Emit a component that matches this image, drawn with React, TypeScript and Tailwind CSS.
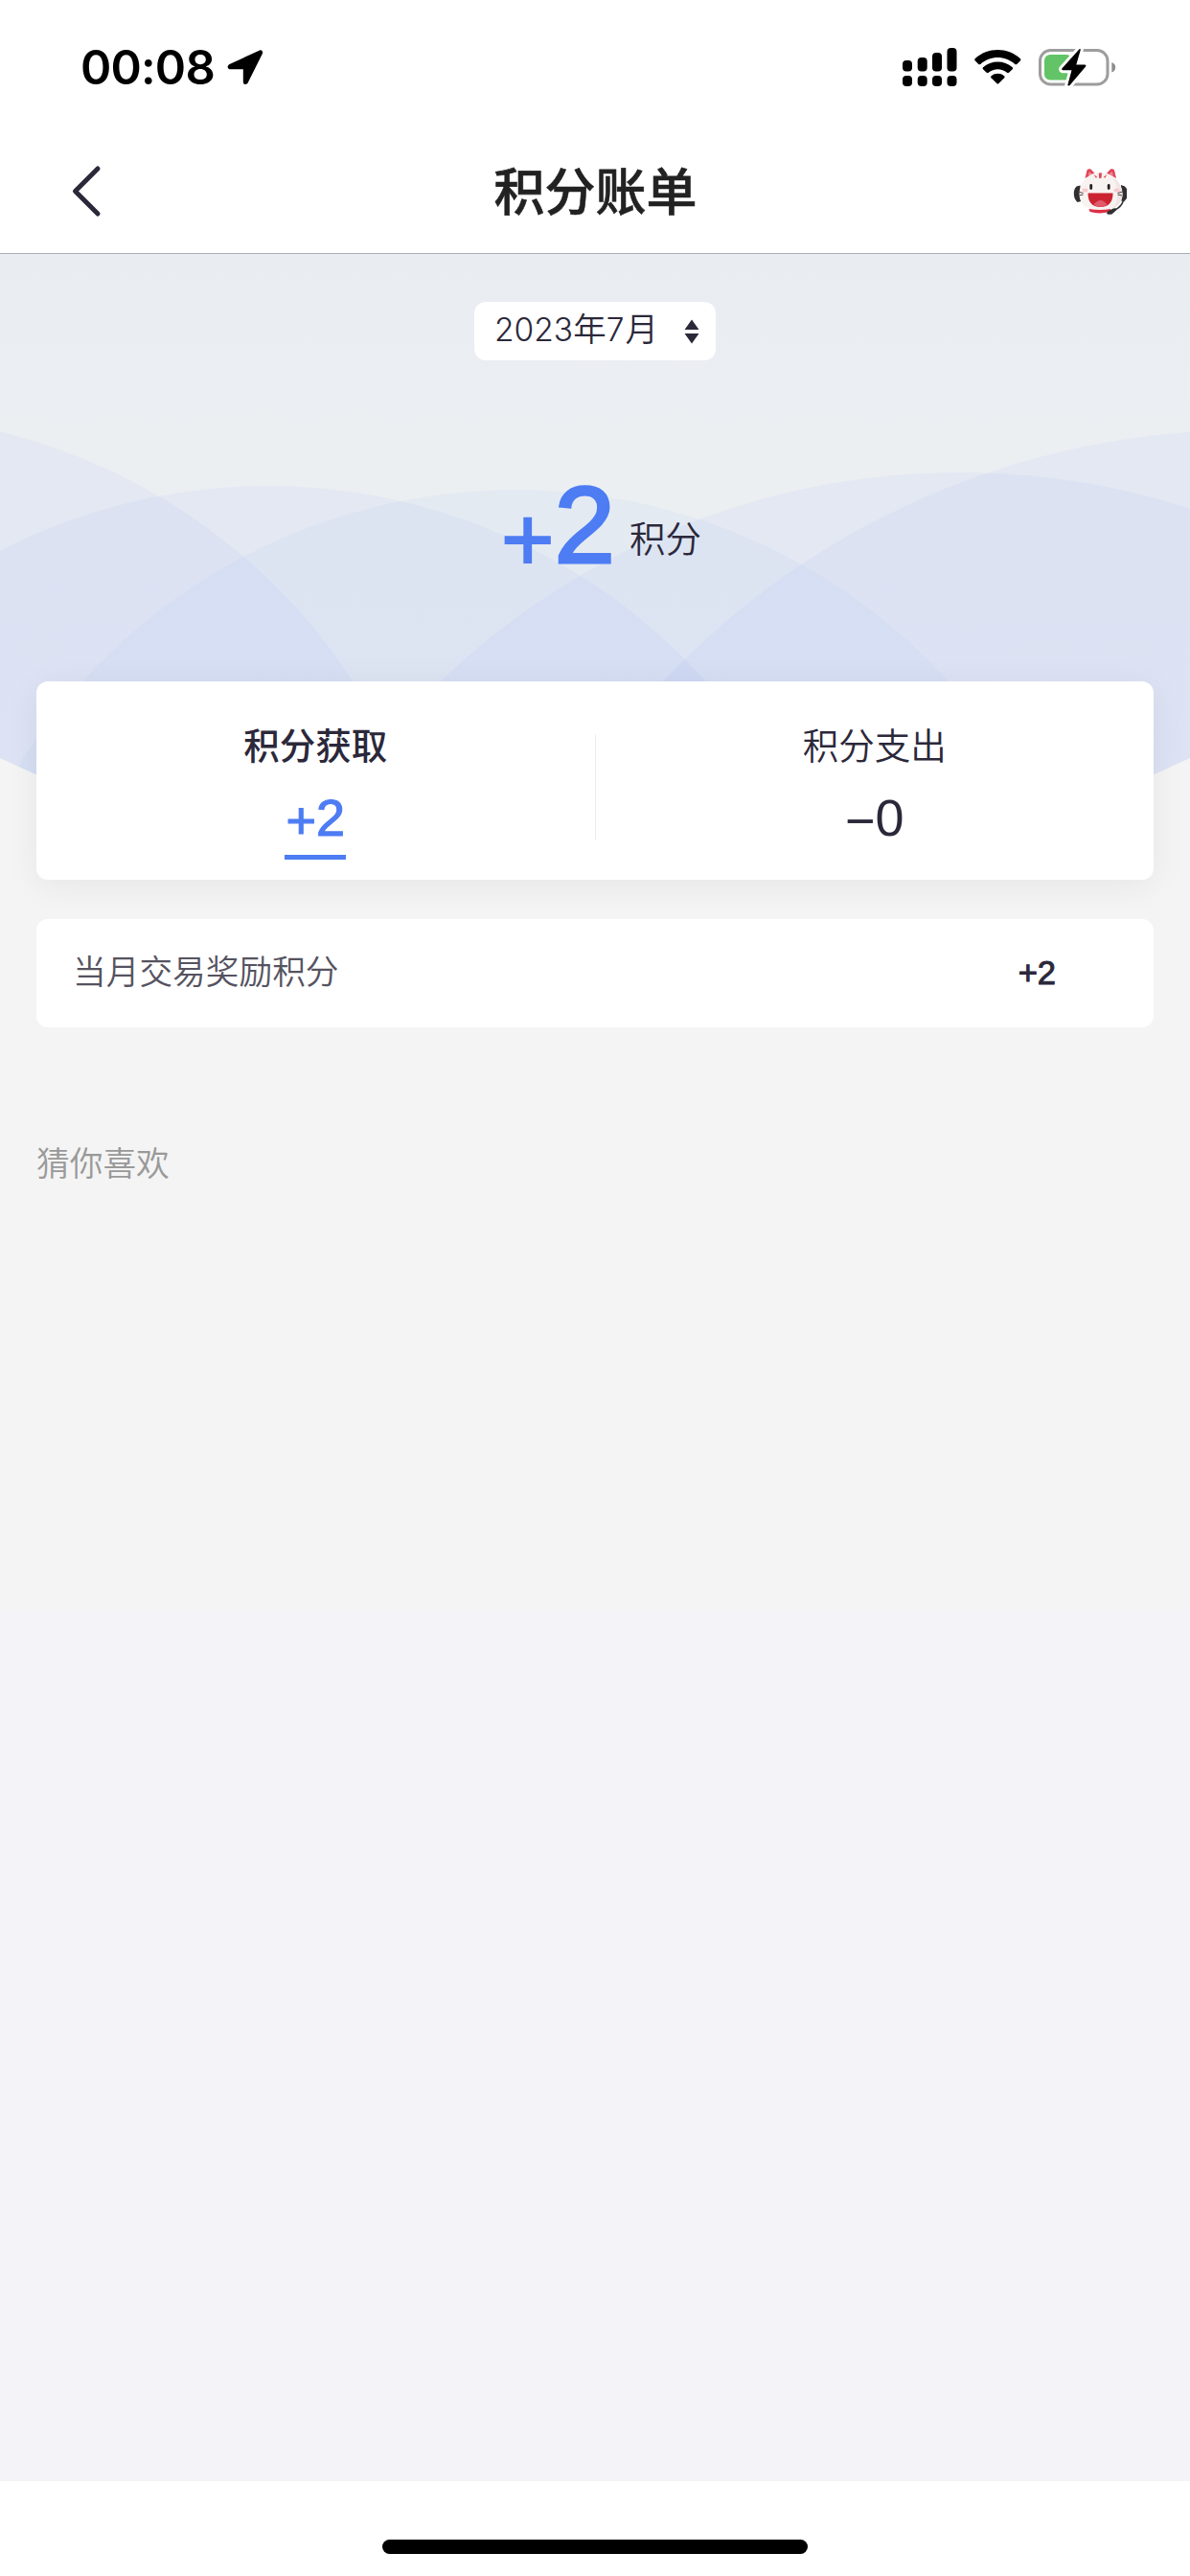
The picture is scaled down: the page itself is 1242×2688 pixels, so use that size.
import { clsx } from "clsx";

const sans = "font-['Liberation_Sans','Noto_Sans_CJK_SC',sans-serif]";

const waves = [
  { cx: -145, cy: 1046, r: 613, fill: "#6c90ff" },
  { cx: 280, cy: 1120, r: 613, fill: "#6c90ff" },
  { cx: 538, cy: 1122, r: 611, fill: "#6cb0ff" },
  { cx: 1002, cy: 1276, r: 783, fill: "#6c90ff" },
  { cx: 1300, cy: 1286, r: 837, fill: "#6c90ff" },
];

const records = [{ name: "当月交易奖励积分", value: "+2" }];

function StatusIcons() {
  return (
    <svg className="h-[44px] w-[226px]" viewBox="940 48 226 44" fill="none">
      {/* dual sim signal */}
      <g fill="#000">
        <rect x="941" y="63" width="10" height="11.5" rx="4" />
        <rect x="956.7" y="60" width="10" height="14.5" rx="4" />
        <rect x="972" y="55" width="10" height="19.5" rx="4" />
        <rect x="987.5" y="50" width="10" height="24.5" rx="4" />
        <rect x="941" y="79" width="10" height="11" rx="4" />
        <rect x="956.7" y="79" width="10" height="11" rx="4" />
        <rect x="972" y="79" width="10" height="11" rx="4" />
        <rect x="987.5" y="79" width="10" height="11" rx="4" />
      </g>
      {/* wifi */}
      <g fill="#000">
        <path d="M1016.6 61.2C1030 48.9 1050.500 48.900 1064 61.200Q1064.900 62.200 1064 63.200L1060.300 66.900Q1059.300 67.700 1058.300 66.900C1048 57.700 1032.500 57.700 1022.300 66.900Q1021.300 67.700 1020.300 66.900L1016.600 63.200Q1015.700 62.200 1016.600 61.200Z" />
        <path d="M1025 70.200C1033.500 62.500 1047.200 62.500 1055.700 70.200Q1056.600 71.200 1055.700 72.200L1052 75.700Q1051 76.500 1050 75.700C1044.500 71 1036.200 71 1030.700 75.700Q1029.700 76.500 1028.700 75.700L1025 72.200Q1024.100 71.200 1025 70.200Z" />
        <path d="M1033.500 79.300C1037.500 76 1043.200 76 1047.200 79.300Q1048.100 80.200 1047.200 81.200L1041.400 87.100Q1040.300 88.100 1039.300 87.100L1033.500 81.200Q1032.600 80.200 1033.500 79.300Z" />
      </g>
      {/* charging battery */}
      <rect x="1084.500" y="52.500" width="70.500" height="35.500" rx="11" stroke="#9d9d9d" strokeWidth="3" />
      <path d="M1159.300 65Q1163.200 66.500 1163.200 70.200Q1163.200 74 1159.300 75.500Z" fill="#8d8d8d" />
      <rect x="1089" y="57" width="29" height="26.500" rx="6" fill="#62c466" />
      <path
        d="M1125.500 51.200L1107.300 71.500Q1106.700 73 1108.300 73.300L1117.500 73.300L1113.300 88.800Q1114 90 1115.500 89L1132.300 69.300Q1132.800 67.800 1131.300 67.500L1122.300 67.500L1126.800 52Q1126.700 50.800 1125.500 51.200Z"
        fill="#000"
        stroke="#fff"
        strokeWidth="6"
        paintOrder="stroke"
      />
    </svg>
  );
}

function Mascot() {
  return (
    <svg className="h-[50px] w-[58px]" viewBox="0 0 58 50" fill="none">
      <path d="M12.500 11L14.500 2.500Q16 .5 18.500 1.500L23 6.500ZM45 11L43 2.500Q41.500 .5 39 1.500L34.500 6.500Z" fill="#e2455a" />
      <path d="M15.500 8L17 4L20 7ZM42 8L40.500 4L37.500 7Z" fill="#f08c96" />
      <path d="M7.500 18.500L3.500 19.500Q.8 22 .8 27Q.8 32.500 4.500 36L8.500 35Z" fill="#303033" />
      <path d="M50 18L54 19.500L56 22V32L53 35.500L49.500 34Z" fill="#303033" />
      <path d="M28.500 5C42 5 51.500 16 51.500 27.500C51.500 37 45 44 28.500 44C12 44 6.500 36.500 6.500 27.500C6.500 15.500 15.500 5 28.500 5Z" fill="#f8f3f1" />
      <path d="M40 9C48 14 51.500 21 51.500 27.500C51.500 34 48 40 41 42.500C48 35 49 20 40 9Z" fill="#efe6e4" />
      <path d="M26.800 5.500H30L29.500 10.500Q28 12 27 10.500ZM21.500 7L25 9.500L24 11ZM35.500 7L32 9.500L33 11Z" fill="#e2455a" />
      <rect x="17.300" y="17" width="2.800" height="6" rx="1.400" fill="#262222" />
      <rect x="35.800" y="17" width="2.800" height="6" rx="1.400" fill="#262222" />
      <ellipse cx="12.500" cy="23.500" rx="3" ry="2" fill="#f9c9cc" />
      <ellipse cx="45.500" cy="23.500" rx="3" ry="2" fill="#f9c9cc" />
      <path d="M5 25L10.500 26.500M6.500 29L10.500 28M46.500 26.500L52 25M46.500 28L51 29" stroke="#4a4444" strokeWidth="1" />
      <path d="M15.500 26.500H41.500Q41.500 41 28.500 41Q15.500 41 15.500 26.500Z" fill="#cb2430" />
      <path d="M21.500 38.500Q28.500 29.500 35.500 38.500Q28.500 43 21.500 38.500Z" fill="#e2596b" />
      <path d="M16.500 43Q28 45 39 43V45.500Q28 49 17.500 46Z" fill="#dd2f45" />
      <path d="M52.500 34Q50.500 41 43.500 44" stroke="#303033" strokeWidth="1.500" />
      <path d="M36 45.500L42 42.500Q46 41.500 45.500 44L40.500 48.500Q35.500 49.500 35 47.500Z" fill="#303033" />
    </svg>
  );
}

function TopBar() {
  return (
    <header className="h-[265px] border-b border-[#aaadb2] bg-white">
      <div className="flex h-[140px] items-center justify-between pl-[84px] pr-[75px]">
        <div className="flex items-center gap-[12px]">
          <span className="w-[140px] whitespace-nowrap pt-[2px] font-['Inter',sans-serif] text-[49px] font-semibold leading-[60px] tracking-[-0.8px] text-black">
            00:08
          </span>
          <svg className="h-[40px] w-[40px]" viewBox="0 0 40 40">
            <path
              d="M3.500 18.200L35.500 3.300Q37.500 3.300 37 5.500L21.500 36.500Q19.200 38 18.800 35.500V21.300H4Q1.500 20.300 3.500 18.200Z"
              fill="#000"
              stroke="#000"
              strokeWidth="2"
              strokeLinejoin="round"
            />
          </svg>
        </div>
        <StatusIcons />
      </div>
      <div className="flex h-[120px] items-center justify-between pl-[70px] pr-[64px]">
        <svg className="h-[60px] w-[58px]" viewBox="0 0 58 60" fill="none">
          <path d="M32 6L8.500 29.500L32 53" stroke="#2b283a" strokeWidth="5" strokeLinecap="round" strokeLinejoin="round" />
        </svg>
        <h1 className="pr-[5px] pt-[3px] text-[53px] font-medium leading-none text-[#222] [-webkit-text-stroke:0.6px_#222]">积分账单</h1>
        <Mascot />
      </div>
    </header>
  );
}

function Waves() {
  return (
    <svg className="absolute left-0 top-0 h-[635px] w-[1242px]" viewBox="0 265 1242 635">
      <defs>
        <linearGradient id="sky" x1="0" y1="0" x2="0" y2="1">
          <stop offset="0" stopColor="#e9edf2" />
          <stop offset="0.4" stopColor="#eceff2" />
          <stop offset="1" stopColor="#edf0f4" />
        </linearGradient>
        <clipPath id="arc">
          <path d="M0 265H1242V791Q1205 808 1180 819L1000 880H242L62 819Q37 808 0 791Z" />
        </clipPath>
      </defs>
      <g clipPath="url(#arc)">
        <rect y="265" width="1242" height="635" fill="url(#sky)" />
        {waves.map((w) => (
          <circle key={w.cx} cx={w.cx} cy={w.cy} r={w.r} fill={w.fill} fillOpacity="0.06" />
        ))}
      </g>
    </svg>
  );
}

function Tab({ label, sign, value, active }: { label: string; sign: string; value: string; active?: boolean }) {
  return (
    <div className="flex flex-1 flex-col items-center pt-[43px] text-[#2b283a]">
      <span className={clsx("text-[37.5px] leading-[50px]", active ? "font-medium" : "font-[350]")}>{label}</span>
      <span
        className={clsx(
          "mt-[16px] h-[77px] border-b-[5px] px-px text-[54px] leading-[66px]",
          active ? "border-[#4d7cf3] text-[#4d7cf3] [-webkit-text-stroke:1.2px_#4d7cf3]" : "border-transparent"
        )}
      >
        <span className="relative top-[3px]">{sign}</span>
        {value}
      </span>
    </div>
  );
}

export default function App() {
  return (
    <div className={clsx("flex h-[2688px] w-[1242px] flex-col bg-[#f4f3f8]", sans)}>
      <TopBar />

      <main className="relative h-[1415px] bg-[#f4f4f4]">
        <Waves />
        <div className="relative flex flex-col px-[38px]">
          <button className="mt-[50px] flex h-[61px] w-[252px] items-center justify-between self-center rounded-[12px] bg-white pb-[2px] pl-[21px] pr-[17px] font-['Inter','Noto_Sans_CJK_SC',sans-serif] text-[34.5px] font-[350] text-[#2b283a]">
            <span className="whitespace-nowrap leading-none">
              <span className="text-[33.5px]">2023</span>年<span className="text-[33.5px] tracking-[1px]">7</span>月
            </span>
            <svg className="mt-[2px] h-[26px] w-[16px]" viewBox="0 0 16 26" fill="#2b283a">
              <path d="M8 .5L15.500 11H.5ZM8 25.500L15.500 15H.5Z" />
            </svg>
          </button>

          {/* Monthly total */}
          <div className="mt-[107px] flex h-[127px] items-baseline justify-center pl-[13px] text-[#4d7cf3]">
            <span className="relative top-[8px] text-[95px] leading-none [-webkit-text-stroke:2px_#4d7cf3]">+</span>
            <span className="text-[114px] leading-[130px] [-webkit-text-stroke:3px_#4d7cf3]">2</span>
            <span className="relative -top-[11px] ml-[15px] text-[37.5px] font-[350] leading-none text-[#2b283a]">积分</span>
          </div>

          <section className="mt-[101px] flex h-[207px] rounded-[12px] bg-white shadow-[0_6px_36px_rgba(0,0,0,0.06)]">
            <Tab label="积分获取" sign="+" value="2" active />
            <div className="mt-[55px] h-[111px] w-px bg-[#ececee]" />
            <Tab label="积分支出" sign="−" value="0" />
          </section>

          <section className="mt-[41px] rounded-[12px] bg-white">
            {records.map((r) => (
              <div key={r.name} className="flex h-[113px] items-center justify-between pb-px pl-[38px] pr-[102px]">
                <span className="text-[34.7px] font-[350] leading-none text-[#555361]">{r.name}</span>
                <span className="text-[34.5px] leading-none text-[#2b283a] [-webkit-text-stroke:1px_#2b283a]">{r.value}</span>
              </div>
            ))}
          </section>

          <h2 className="mt-[119px] text-[34.7px] font-[350] leading-[48px] text-[#999]">猜你喜欢</h2>
        </div>
      </main>

      <footer className="mt-auto flex h-[99px] justify-center bg-white pt-[61px]">
        <div className="h-[15px] w-[444px] rounded-full bg-black" />
      </footer>
    </div>
  );
}
